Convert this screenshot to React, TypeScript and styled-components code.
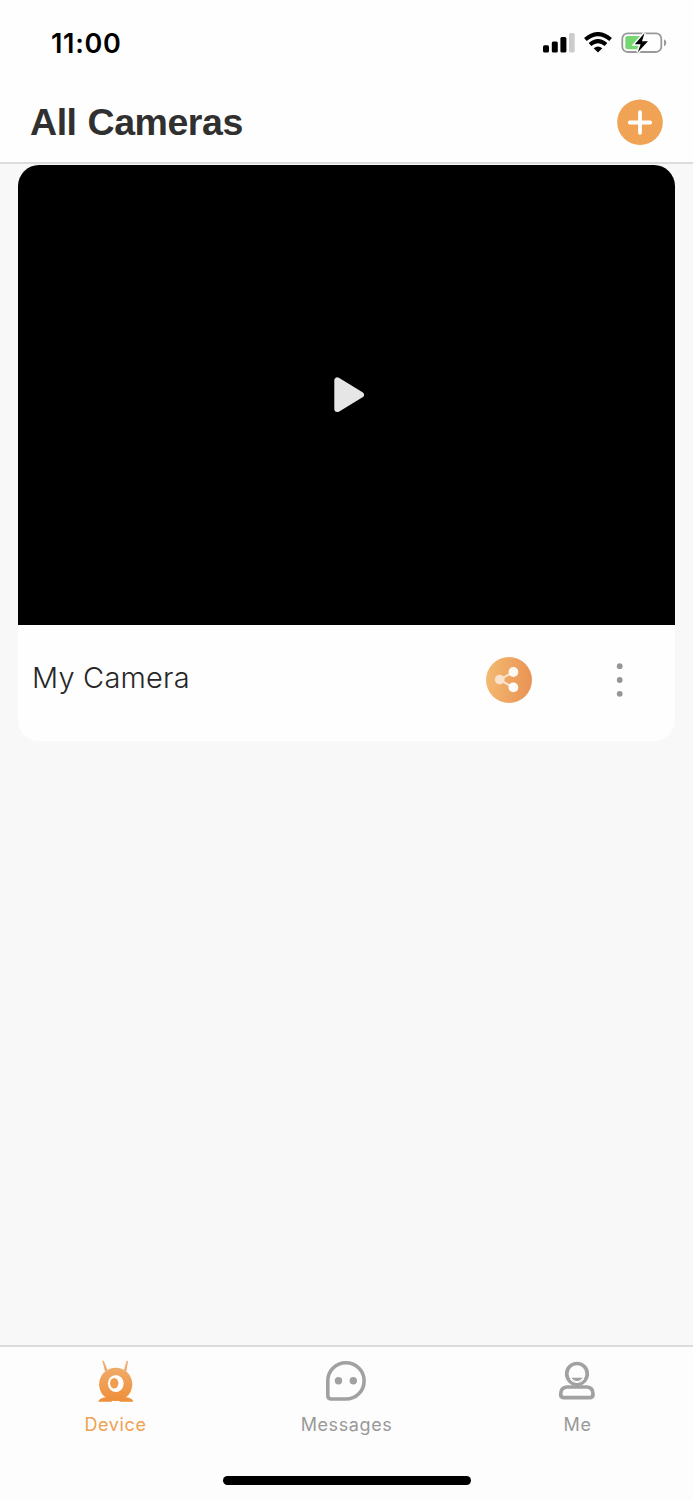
import React from "react";
import styled, { createGlobalStyle } from "styled-components";

const GlobalStyle = createGlobalStyle`
  *, *::before, *::after { box-sizing: border-box; }
  body { margin: 0; background: #f8f8f8; }
  svg { display: block; flex: none; }
  button { padding: 0; border: 0; background: none; font: inherit; color: inherit; }
`;

const Screen = styled.div`
  display: flex;
  flex-direction: column;
  width: 693px;
  height: 1500px;
  background: #f8f8f8;
  font-family: Inter, "Liberation Sans", sans-serif;
  overflow: hidden;
`;

const TopArea = styled.header`
  height: 164px;
  flex: none;
  background: #fefefe;
  border-bottom: 2px solid #dcdcdc;
`;

const StatusBar = styled.div`
  display: flex;
  align-items: center;
  justify-content: space-between;
  height: 86px;
  padding: 0 26px 0 51px;
`;

const Clock = styled.time`
  padding-top: 2px;
  font-size: 27px;
  font-weight: 600;
  line-height: 32px;
  letter-spacing: 0.7px;
  color: #000;
`;

const StatusIcons = styled.div`
  display: flex;
  align-items: center;
  gap: 9px;
`;

const TitleRow = styled.div`
  display: flex;
  align-items: center;
  justify-content: space-between;
  height: 72px;
  padding: 0 30px;
`;

const Title = styled.h1`
  margin: 0;
  font: bold 37.5px/44px "Liberation Sans", Arial, sans-serif;
  letter-spacing: -0.45px;
  word-spacing: 1px;
  color: #303030;
`;

const AddButton = styled.button`
  width: 46px;
  height: 46px;
`;

const Content = styled.main`
  flex: 1;
  padding: 1px 18px 0;
`;

const Card = styled.article`
  height: 576px;
  border-radius: 21px;
  background: #fefefe;
  overflow: hidden;
`;

const Preview = styled.div`
  display: flex;
  align-items: center;
  justify-content: center;
  height: 460px;
  padding-left: 6px;
  background: #000;
`;

const CardFooter = styled.div`
  display: flex;
  align-items: center;
  height: 110px;
  padding: 0 47px 0 14px;
`;

const CameraName = styled.h2`
  flex: 1;
  margin: -5px 0 0;
  font-size: 29px;
  font-weight: 300;
  line-height: 36px;
  letter-spacing: 0.2px;
  color: #262626;
`;

const ShareButton = styled.button`
  width: 46px;
  height: 46px;
  margin-right: 80px;
`;

const MoreButton = styled.button`
  width: 16px;
  height: 38px;
`;

const TabBar = styled.footer`
  height: 155px;
  flex: none;
  background: #fdfdfd;
  border-top: 2px solid #dcdcdc;
`;

const Tabs = styled.nav`
  display: grid;
  grid-template-columns: repeat(3, 1fr);
  height: 129px;
`;

const Tab = styled.button<{ $active?: boolean }>`
  display: flex;
  flex-direction: column;
  align-items: center;
  gap: 9px;
  padding-top: 11px;
  color: ${(p) => (p.$active ? "#f0a050" : "#999")};
  font-size: 18px;
  font-weight: 400;
  line-height: 24px;
  letter-spacing: 0.6px;

  svg {
    margin-right: 1px;
  }
`;

const HomeIndicator = styled.div`
  width: 248px;
  height: 9px;
  margin: 0 auto;
  border-radius: 5px;
  background: #000;
`;

const SignalIcon = () => (
  <svg width="32" height="22" viewBox="543 32 32 22">
    <rect x="543" y="45.2" width="6" height="7.3" rx="1.5" />
    <rect x="551.8" y="41.5" width="6" height="11" rx="1.5" />
    <rect x="560.4" y="37" width="6" height="15.5" rx="1.5" />
    <rect x="569" y="33" width="5.7" height="19.5" rx="1.5" fill="#ccc" />
  </svg>
);

const WifiIcon = () => (
  <svg width="28" height="22" viewBox="584 32 28 22">
    <g fill="none" stroke="#000" strokeWidth="4">
      <path d="M585.4 39.6Q598 28.5 610.6 39.6" />
      <path d="M590 44.6Q598 37.6 606 44.6" />
    </g>
    <path d="M593.7 48.2Q598 44.7 602.3 48.2L598 52.6Z" />
  </svg>
);

const BatteryIcon = () => (
  <svg width="46" height="22" viewBox="621 32 46 22">
    <rect x="622.3" y="33.3" width="39" height="18.7" rx="5.3" fill="none" stroke="#999" strokeWidth="1.8" />
    <path d="M664 39.2Q666.4 40.3 666.4 42.7T664 46.2Z" fill="#999" />
    <rect x="625.3" y="36" width="16" height="13.3" rx="2.5" fill="#76d672" />
    <path
      d="M644.6 33L634.8 44.2H640.6L637.8 52.3L648 41.2H642Z"
      stroke="#fefefe"
      strokeWidth="3"
      paintOrder="stroke"
    />
  </svg>
);

const AddIcon = () => (
  <svg width="46" height="46" viewBox="0 0 46 46">
    <circle cx="23" cy="23.2" r="22.8" fill="#f0a355" />
    <path d="M12.8 23.5H33.2M23 13.2V33.8" stroke="#fff" strokeWidth="3.8" strokeLinecap="round" />
  </svg>
);

const PlayIcon = () => (
  <svg width="31" height="36" viewBox="334 377 31 36">
    <path
      d="M337.3 380.3V409.1L361 394.7Z"
      fill="#e6e6e6"
      stroke="#e6e6e6"
      strokeWidth="6"
      strokeLinejoin="round"
    />
  </svg>
);

const ShareIcon = () => (
  <svg width="46" height="46" viewBox="486 657 46 46">
    <defs>
      <linearGradient id="share-bg" x1="0" x2="1" y1="0" y2="0.1">
        <stop offset="0" stopColor="#f4bb73" />
        <stop offset="1" stopColor="#e99455" />
      </linearGradient>
    </defs>
    <circle cx="509" cy="680" r="23" fill="url(#share-bg)" />
    <path d="M513.5 672L499.5 679.7L513.5 687.5" fill="none" stroke="#fae6d4" strokeWidth="2" />
    <circle cx="499.7" cy="679.6" r="4.9" fill="#fae2cc" />
    <circle cx="513.4" cy="672" r="4.9" fill="#fff9f3" />
    <circle cx="513.4" cy="687.4" r="4.9" fill="#fffefd" />
  </svg>
);

const MoreIcon = () => (
  <svg width="16" height="38" viewBox="0 0 16 38" fill="#969696">
    <circle cx="7.7" cy="5.2" r="2.9" />
    <circle cx="7.7" cy="19" r="2.9" />
    <circle cx="7.7" cy="32.8" r="2.9" />
  </svg>
);

const DeviceIcon = () => (
  <svg width="42" height="46" viewBox="93.8 1358 42 46">
    <defs>
      <linearGradient id="device-fill" x1="0" x2="0" y1="1360" y2="1402" gradientUnits="userSpaceOnUse">
        <stop offset="0" stopColor="#f2b175" />
        <stop offset="1" stopColor="#ee8e38" />
      </linearGradient>
    </defs>
    <g fill="url(#device-fill)">
      <path d="M102.2 1361.1L103.6 1360.8L107.3 1370L104.8 1371.5Z" />
      <path d="M127.8 1361.1L126.4 1360.8L123.7 1370L126.2 1371.5Z" />
      <circle cx="115.5" cy="1384.3" r="16.6" />
      <path d="M98.2 1401.8Q98.4 1398.3 105 1397.3L115.5 1400L126.5 1397.3Q132.8 1398.3 133 1401.8H119.8L118.5 1400.5H112.5L111 1401.8Z" />
    </g>
    <ellipse cx="115.6" cy="1383.5" rx="7.9" ry="8.6" fill="#fff" />
    <ellipse cx="114" cy="1383.3" rx="4.2" ry="5.3" fill="#f09d50" />
  </svg>
);

const MessagesIcon = () => (
  <svg width="42" height="46" viewBox="325 1358 42 46">
    <path
      d="M346 1362.8A18.1 18.1 0 0 1 346 1399H331.4Q327.8 1399 327.8 1395.4V1381A18.1 18.1 0 0 1 346 1362.8Z"
      fill="none"
      stroke="#a1a1a1"
      strokeWidth="3.6"
    />
    <circle cx="338.5" cy="1380.8" r="3.7" fill="#a1a1a1" />
    <circle cx="353.3" cy="1380.8" r="3.7" fill="#a1a1a1" />
  </svg>
);

const MeIcon = () => (
  <svg width="42" height="46" viewBox="556 1358 42 46">
    <g fill="none" stroke="#a1a1a1" strokeWidth="3.7">
      <circle cx="577" cy="1373.8" r="10.3" />
      <path d="M567 1387H587Q593 1387.3 593 1394.2Q593 1397.7 589.5 1397.7H564.2Q560.7 1397.7 560.7 1394.2Q560.7 1387.3 567 1387Z" />
    </g>
    <path d="M571.5 1377.8H582.5Q580.8 1380.9 577 1380.9T571.5 1377.8Z" fill="#a1a1a1" />
    <path d="M570.2 1379.2Q572.6 1382.6 577 1382.6T583.8 1379.2" fill="none" stroke="#fff" strokeWidth="1" />
  </svg>
);

export default function App() {
  return (
    <>
      <GlobalStyle />
      <Screen>
        <TopArea>
          <StatusBar>
            <Clock>11:00</Clock>
            <StatusIcons>
              <SignalIcon />
              <WifiIcon />
              <BatteryIcon />
            </StatusIcons>
          </StatusBar>
          <TitleRow>
            <Title>All Cameras</Title>
            <AddButton aria-label="Add camera">
              <AddIcon />
            </AddButton>
          </TitleRow>
        </TopArea>
        <Content>
          <Card>
            <Preview>
              <PlayIcon />
            </Preview>
            <CardFooter>
              <CameraName>My Camera</CameraName>
              <ShareButton aria-label="Share">
                <ShareIcon />
              </ShareButton>
              <MoreButton aria-label="More">
                <MoreIcon />
              </MoreButton>
            </CardFooter>
          </Card>
        </Content>
        <TabBar>
          <Tabs>
            <Tab $active>
              <DeviceIcon />
              Device
            </Tab>
            <Tab>
              <MessagesIcon />
              Messages
            </Tab>
            <Tab>
              <MeIcon />
              Me
            </Tab>
          </Tabs>
          <HomeIndicator />
        </TabBar>
      </Screen>
    </>
  );
}
